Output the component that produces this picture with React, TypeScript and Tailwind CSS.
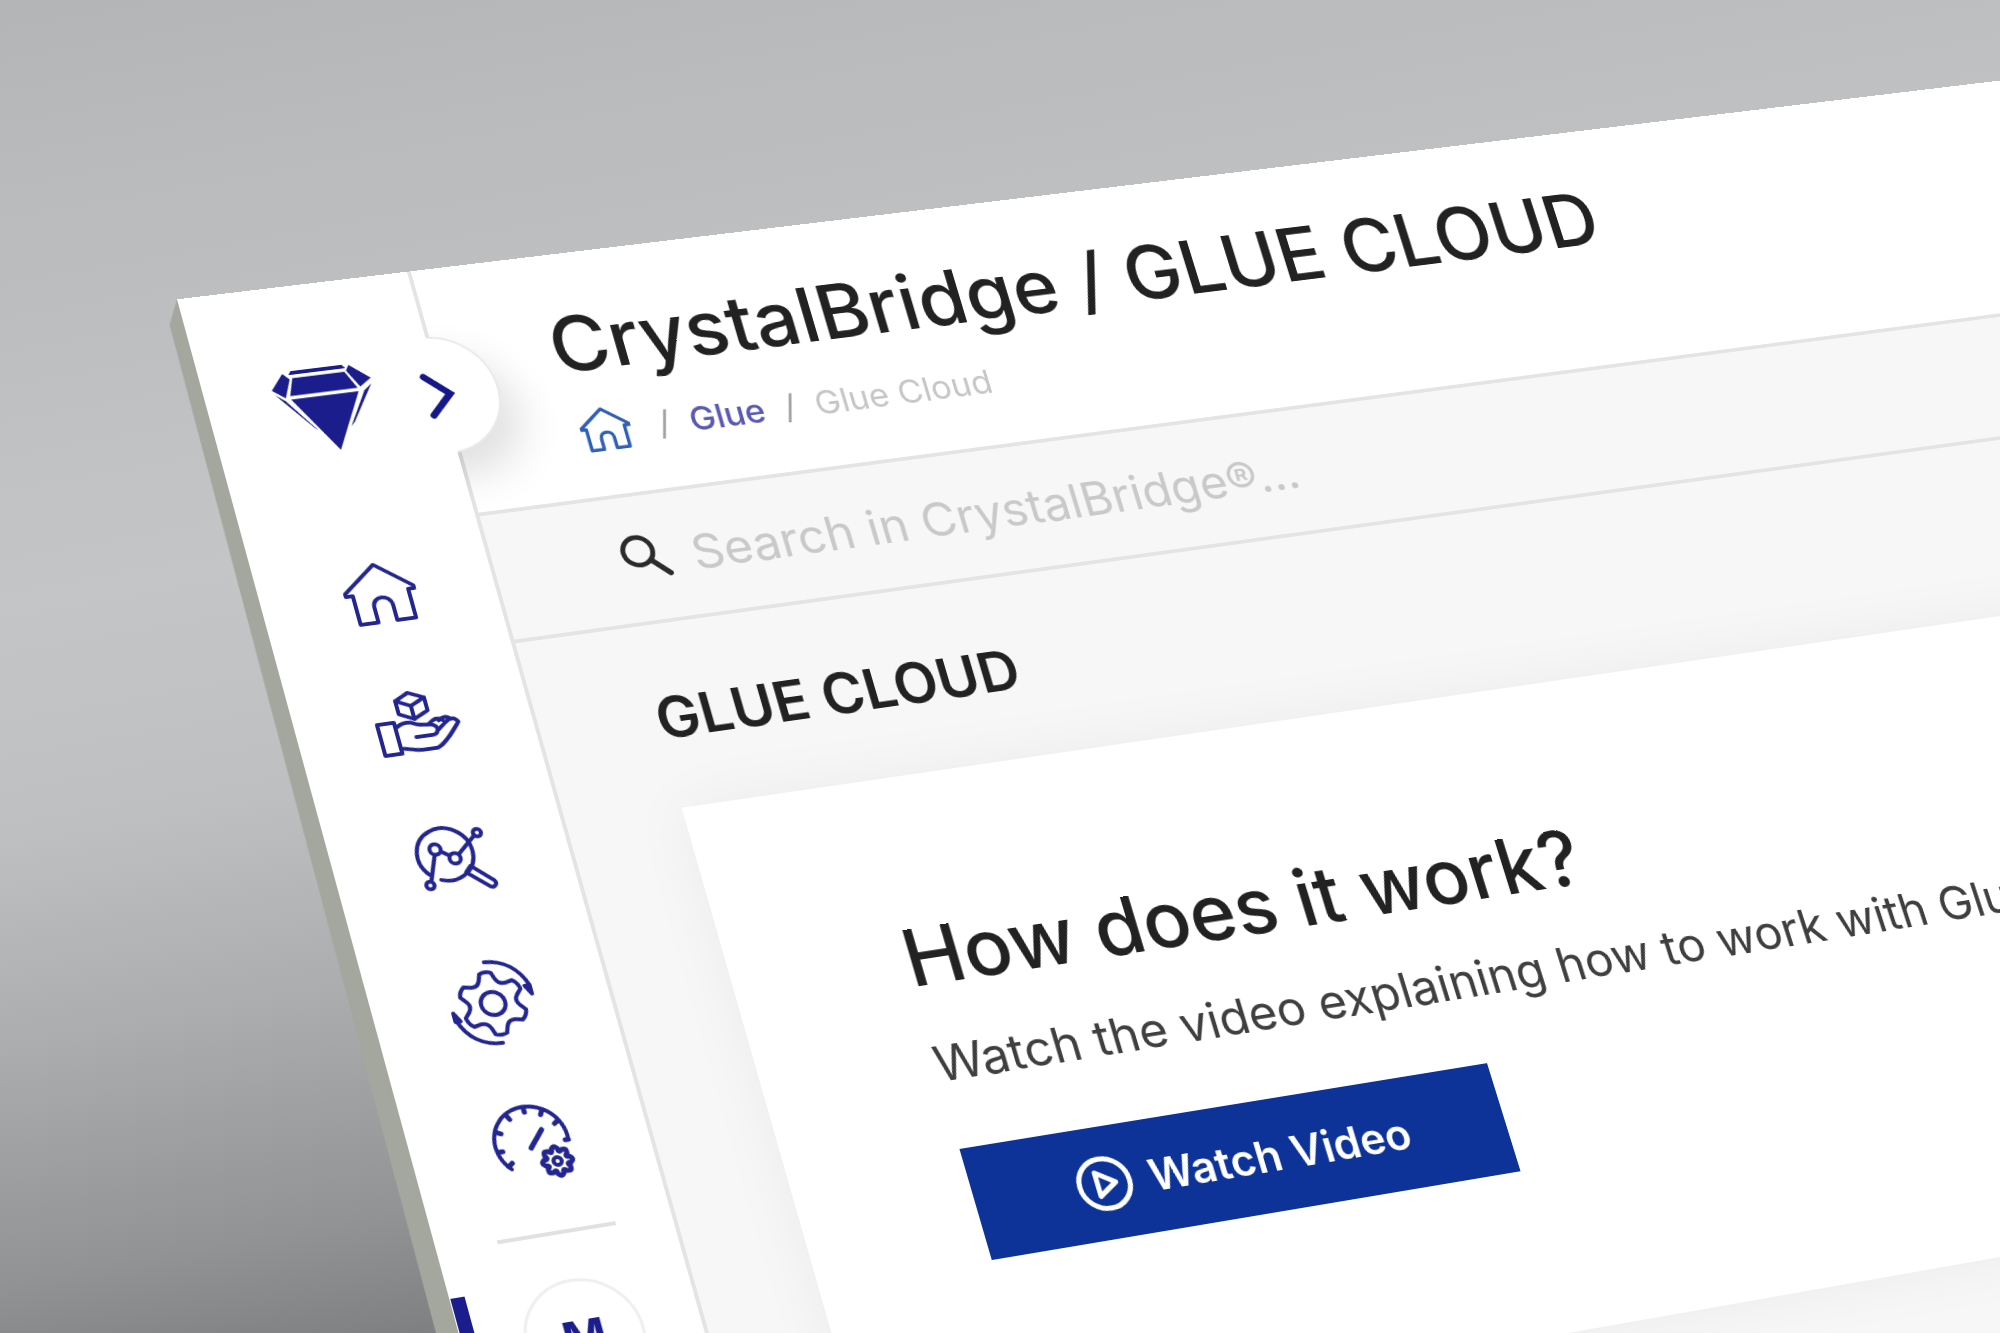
import { useState } from "react";
import type { ReactNode } from "react";

// Projects the flat page onto the tilted board
const BOARD_MATRIX =
  "matrix3d(1, -0.10609, 0, 0.000043478, 0.2422, 0.90061, 0, -0.000032165, 0, 0, 1, 0, 177, 299.3, 0, 1)";

function gearPath(cx: number, cy: number, teeth: number, outer: number, inner: number) {
  const step = 360 / teeth;
  const point = (deg: number, r: number) => {
    const rad = ((deg - 90) * Math.PI) / 180;
    return `${(cx + r * Math.cos(rad)).toFixed(1)} ${(cy + r * Math.sin(rad)).toFixed(1)}`;
  };
  const parts: string[] = [];
  for (let i = 0; i < teeth; i++) {
    const a = i * step;
    parts.push(`${i === 0 ? "M" : "L"}${point(a - step * 0.17, outer)}`);
    parts.push(`Q${point(a, outer + 2)} ${point(a + step * 0.17, outer)}`);
    parts.push(`L${point(a + step * 0.3, inner + 2)}`);
    parts.push(`Q${point(a + step * 0.5, inner - 3)} ${point(a + step * 0.7, inner + 2)}`);
  }
  return parts.join("") + "Z";
}

function DiamondLogo() {
  return (
    <svg viewBox="0 0 104 92" className="h-[90px] w-[102px] fill-[#1b1d8c]" aria-hidden="true">
      <path d="M24 0H77L80 4H21Z" />
      <path d="M24 8H78L87 27H17Z" />
      <path d="M15 2L21 9L12 29L0 19Z" />
      <path d="M84 1L103 18L90 26L80 7Z" />
      <path d="M17 31H87L53 92Z" />
      <path d="M2 24L11 32L36 68L33 65Z" />
      <path d="M102 24L93 31L70 68L75 63Z" />
    </svg>
  );
}

function HouseIcon({ className }: { className: string }) {
  return (
    <svg viewBox="82 302 74 68" className={className} fill="none" stroke="currentColor" strokeLinejoin="round" strokeLinecap="round" aria-hidden="true">
      <path d="M84 332L119 305L154 332V334H147V367H128V351C128 338 109 338 109 351V367H91V334H84Z" />
    </svg>
  );
}

function NavIcon({ top, children }: { top: number; children: ReactNode }) {
  return (
    <svg
      viewBox={`70 ${top} 96 96`}
      className="size-24"
      fill="none"
      stroke="currentColor"
      strokeWidth="4"
      strokeLinejoin="round"
      strokeLinecap="round"
      aria-hidden="true"
    >
      {children}
    </svg>
  );
}

function HomeNavIcon() {
  return (
    <NavIcon top={285}>
      <path d="M84 333L119 306L153 333V336H147V367H128V351C128 338 109 338 109 351V367H91V336H84Z" />
    </NavIcon>
  );
}

function DeliverNavIcon() {
  return (
    <NavIcon top={431}>
      <path d="M80 473H97V506H80Z" />
      <path d="M97 479C105 474 112 474 117 477C122 480 131 479 135 481C140 484 138 491 131 491H115" />
      <path d="M97 501C105 501 109 505 119 505H133C141 503 152 490 160 481C157 475 151 476 147 480L139 486" />
      <path d="M131 479C137 474 142 474 145 477M141 477C147 473 151 474 153 477" />
      <path d="M118 444L133 451V465L118 472L104 465V451Z" />
      <path d="M104 451L118 458L133 451M118 458V472" />
    </NavIcon>
  );
}

function AnalyticsNavIcon() {
  return (
    <NavIcon top={577}>
      <path d="M91 634A27.5 27.5 0 1 1 101 641" />
      <path d="M127 637L133 631L152 649C155 653 151 657 147 655Z" />
      <circle cx="103" cy="609" r="5.5" />
      <circle cx="120" cy="621" r="5.5" />
      <circle cx="148" cy="598" r="4" />
      <circle cx="89" cy="645" r="4" />
      <path d="M108 612L115 617M125 617L145 600M101 615L91 641" />
    </NavIcon>
  );
}

function ProcessNavIcon() {
  return (
    <NavIcon top={723}>
      <circle cx="118" cy="774" r="12" />
      <path d={gearPath(118, 774, 6, 32, 24)} />
      <path d="M120 731C139 732 152 743 158 761" />
      <path d="M117 815C98 815 84 804 78 786" />
      <path d="M158 761V770L153 761Z" fill="currentColor" />
      <path d="M77 787V778L82 787Z" fill="currentColor" />
    </NavIcon>
  );
}

function PerformanceNavIcon() {
  return (
    <NavIcon top={869}>
      <path d="M92 943A36 36 0 1 1 154 922" />
      <path d="M90 940L94 937M84 924H88M87 904L91 906M101 889L103 893M119 885V888M136 889L134 893M148 902L145 904M154 922H151" strokeWidth="5" />
      <path d="M116 925L131 908" strokeWidth="5" />
      <path d={gearPath(138, 942, 8, 14, 11)} strokeWidth="5" />
      <circle cx="138" cy="942" r="4" />
    </NavIcon>
  );
}

const NAV_ITEMS = [
  { label: "Home", icon: <HomeNavIcon /> },
  { label: "Deliver", icon: <DeliverNavIcon /> },
  { label: "Analytics", icon: <AnalyticsNavIcon /> },
  { label: "Process", icon: <ProcessNavIcon /> },
  { label: "Performance", icon: <PerformanceNavIcon /> },
];

function Sidebar() {
  return (
    <aside className="relative flex w-[238px] shrink-0 flex-col items-center border-r-4 border-[#e4e4e5] bg-white pt-[91px] pl-1">
      <a href="#" aria-label="CrystalBridge">
        <DiamondLogo />
      </a>

      <nav className="mt-[79px] flex flex-col">
        {NAV_ITEMS.map((item) => (
          <a
            key={item.label}
            href="#"
            aria-label={item.label}
            className="flex h-[146px] items-center justify-center text-[#23268f]"
          >
            {item.icon}
          </a>
        ))}
      </nav>

      <hr className="mt-[21px] w-[118px] border-t-4 border-[#e1e1e2]" />

      <div className="mt-[46px] flex w-full justify-center">
        <span className="absolute left-px h-[120px] w-3.5 bg-[#1b1d8c]" />
        <button className="size-[118px] rounded-full border-3 border-[#efeff0] text-[46px] font-bold text-[#1b1d8c]">
          M
        </button>
      </div>
    </aside>
  );
}

function SidebarToggle({ onToggle }: { onToggle: () => void }) {
  return (
    <div className="absolute top-[72px] left-[165px] z-10">
      {/* Only the half that bulges over the header is drawn */}
      <div className="[clip-path:inset(-60px_-120px_-120px_69px)]">
        <button
          onClick={onToggle}
          aria-label="Expand sidebar"
          className="block size-32 rounded-full border-2 border-[#e9e9ea] bg-white shadow-[14px_26px_44px_rgba(0,0,0,0.12)]"
        />
      </div>
      <svg
        viewBox="0 0 36 58"
        className="pointer-events-none absolute top-[35px] left-[49px] h-[58px] w-9"
        fill="none"
        stroke="#16188a"
        strokeWidth="7"
        strokeLinecap="round"
        aria-hidden="true"
      >
        <path d="M7 8L29 29L7 50" />
      </svg>
    </div>
  );
}

function Header() {
  return (
    <header className="h-[270px] border-b-4 border-[#e4e4e5] bg-white pt-[50px] pl-[118px]">
      <h1 className="text-[82px] leading-[100px] font-medium whitespace-nowrap text-[#222]">
        CrystalBridge / GLUE CLOUD
      </h1>
      <nav aria-label="Breadcrumb" className="mt-4 flex items-center gap-5 pl-1.5 text-[36px] leading-[52px]">
        <a href="#" aria-label="Home" className="mr-2 text-[#2f5fb8]">
          <HouseIcon className="h-[49px] w-[52px] stroke-[5]" />
        </a>
        <span className="pt-1 text-[#a2a2a2]">/</span>
        <a href="#" className="pt-1 font-medium text-[#5a5ab2]">
          Glue
        </a>
        <span className="pt-1 text-[#a2a2a2]">/</span>
        <span className="pt-1 text-[#c6c6c6]">Glue Cloud</span>
      </nav>
    </header>
  );
}

function SearchBar() {
  const [query, setQuery] = useState("");

  return (
    <label className="flex h-[138px] items-center gap-6 border-b-4 border-[#e4e4e5] pl-[129px]">
      <svg viewBox="0 0 48 48" className="mb-1 size-12" fill="none" stroke="#2b2b2b" strokeLinecap="round" aria-hidden="true">
        <circle cx="18" cy="18" r="15" strokeWidth="5" />
        <path d="M29 29L45 45" strokeWidth="6" />
      </svg>
      <input
        type="text"
        value={query}
        onChange={(e) => setQuery(e.target.value)}
        aria-label="Search in CrystalBridge"
        placeholder="Search in CrystalBridge®..."
        className="h-20 w-[1200px] bg-transparent text-[51px] outline-none placeholder:text-[#c9c9c9]"
      />
    </label>
  );
}

function HowItWorksCard() {
  return (
    <section className="mr-20 ml-[118px] h-[682px] bg-white pt-[141px] pl-[177px] shadow-[0_0_60px_rgba(0,0,0,0.05)]">
      <h3 className="text-[82px] leading-[100px] font-medium text-[#222]">How does it work?</h3>
      <p className="mt-[26px] text-[51px] leading-[72px] whitespace-nowrap text-[#3f3f3f]">
        Watch the video explaining how to work with Glue
      </p>
      <button className="mt-[53px] flex h-[117px] w-[559px] items-center justify-center gap-[18px] bg-[#0d3399] pl-1 text-[45px] font-semibold text-white">
        <svg viewBox="0 0 56 56" className="size-[58px]" fill="none" stroke="currentColor" strokeWidth="5" strokeLinejoin="round" aria-hidden="true">
          <circle cx="28" cy="28" r="25" />
          <path d="M21 16L39 28L21 40Z" />
        </svg>
        Watch Video
      </button>
    </section>
  );
}

export default function App() {
  const [expanded, setExpanded] = useState(false);

  return (
    <div className="relative h-screen w-full overflow-hidden bg-[linear-gradient(170deg,#b4b5b6_0%,#bbbcbe_15%,#c4c5c6_36%,#bebfc0_50%,#acadaf_62%,#929395_76%,#7b7c7e_85%)] font-['Inter','Liberation_Sans',sans-serif]">
      {/* Tilted board */}
      <div className="absolute top-0 left-0 h-[1500px] w-[2160px] origin-top-left" style={{ transform: BOARD_MATRIX }}>
        {/* Board thickness */}
        <div className="absolute top-0 left-[-24px] h-full w-[25px] bg-[#a4a79e] [clip-path:polygon(24px_0,10px_26px,0_100%,100%_100%,100%_0)]" />

        <div className="relative flex h-full bg-[#f7f7f7]" data-expanded={expanded}>
          <Sidebar />
          <SidebarToggle onToggle={() => setExpanded(!expanded)} />
          <main className="min-w-0 flex-1">
            <Header />
            <SearchBar />
            <h2 className="mt-[60px] mb-[55px] pl-[118px] text-[59px] leading-20 font-semibold text-[#222]">
              GLUE CLOUD
            </h2>
            <HowItWorksCard />
          </main>
        </div>
      </div>
    </div>
  );
}
